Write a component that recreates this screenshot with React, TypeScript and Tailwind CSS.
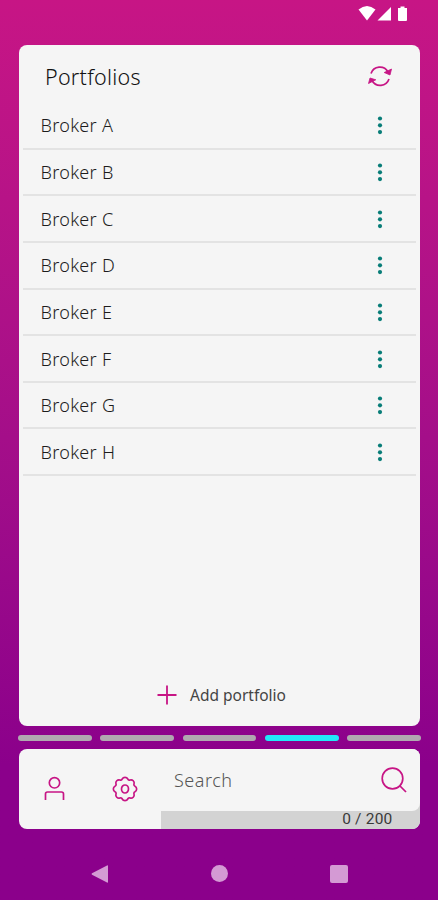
const brokers = ["A", "B", "C", "D", "E", "F", "G", "H"];
const pages = [0, 1, 2, 3, 4];
const activePage = 3;

const StatusBar = () => {
  return (
    <div className="flex h-[45px] justify-end pt-[5px] pr-[28px]">
      <svg width="52" height="18" viewBox="0 0 52 18" fill="white">
        <path d="M.5 4.5Q9-2.500 17.500 4.500L9 15.500Z" />
        <path d="M33 2V15.500H19.500Z" />
        <path d="M42.500 1.500h4V3h2.500v12q0 1-1 1h-7q-1 0-1-1V3h2.500Z" />
      </svg>
    </div>
  );
};

const RefreshIcon = () => {
  return (
    <svg
      width="26"
      height="24"
      viewBox="0 0 26 24"
      fill="none"
      stroke="#c71585"
      strokeWidth="1.7"
    >
      <path d="M4 8.500A9.300 9.300 0 0 1 21 7" />
      <path d="M22 14A9.300 9.300 0 0 1 5 15.500" />
      <path d="M17.200 7.500L24.500 4L23 10Z" fill="#c71585" strokeWidth=".8" />
      <path d="M8.800 14.800L3 13L1.500 18.500Z" fill="#c71585" strokeWidth=".8" />
    </svg>
  );
};

const BrokerRow = ({ name }: { name: string }) => {
  return (
    <li className="flex h-[46.650px] items-center justify-between border-b-2 border-[#e3e3e3] pr-[33px] pl-[18px]">
      <span className="pt-px text-[18px] font-light tracking-[0.3px] text-[#1c1c1c]">
        Broker {name}
      </span>
      <svg width="6" height="20" viewBox="0 0 6 20" fill="#087d78">
        <circle cx="3" cy="3.500" r="2.100" />
        <circle cx="3" cy="10.300" r="2.100" />
        <circle cx="3" cy="17.100" r="2.100" />
      </svg>
    </li>
  );
};

const PortfolioCard = () => {
  return (
    <section className="mr-[18px] ml-[18.500px] flex h-[681px] flex-col rounded-lg bg-[#f5f5f5] px-1">
      <header className="flex h-[58px] items-center justify-between pt-[6px] pr-[23px] pl-[22.500px]">
        <h1 className="text-[21.500px] font-[350] tracking-[0.25px] text-[#111]">Portfolios</h1>
        <RefreshIcon />
      </header>
      <ul>
        {brokers.map((name) => (
          <BrokerRow key={name} name={name} />
        ))}
      </ul>
      <button className="mt-auto mb-[19px] flex items-center gap-[13.500px] pl-[134px]">
        <svg width="20" height="20" viewBox="0 0 20 20" stroke="#c71585" strokeWidth="1.8">
          <path d="M10 .5V19.500M.5 10H19.500" />
        </svg>
        <span className="text-[15.500px] text-[#444]">Add portfolio</span>
      </button>
    </section>
  );
};

const BottomBar = () => {
  return (
    <section className="mt-2 mr-[18px] ml-[18.500px] flex h-[80.500px] overflow-hidden rounded-lg bg-[#f5f5f5]">
      <div className="flex w-[142.500px] items-center justify-between pr-[23px] pl-[25px]">
        <svg
          width="21"
          height="25"
          viewBox="0 0 21 25"
          fill="none"
          stroke="#c71585"
          strokeWidth="1.700"
        >
          <circle cx="10.500" cy="6.800" r="5.200" />
          <path d="M1.500 24V18Q1.500 16 3.500 16H17.500Q19.500 16 19.500 18V24" />
        </svg>
        <svg
          width="26"
          height="26"
          viewBox="-13 -13 26 26"
          fill="none"
          stroke="#c71585"
          strokeWidth="1.700"
          strokeLinejoin="round"
        >
          <path d="M-2.800-10A3.200 3.200 0 0 1 2.800-10A1.700 1.700 0 0 0 5.090-9.050A3.200 3.200 0 0 1 9.050-5.090A1.700 1.700 0 0 0 10-2.800A3.200 3.200 0 0 1 10 2.800A1.700 1.700 0 0 0 9.050 5.090A3.200 3.200 0 0 1 5.090 9.050A1.700 1.700 0 0 0 2.800 10A3.200 3.200 0 0 1-2.800 10A1.700 1.700 0 0 0-5.090 9.050A3.200 3.200 0 0 1-9.050 5.090A1.700 1.700 0 0 0-10 2.800A3.200 3.200 0 0 1-10-2.800A1.700 1.700 0 0 0-9.050-5.090A3.200 3.200 0 0 1-5.090-9.050A1.700 1.700 0 0 0-2.800-10Z" />
          <ellipse cx="0" cy="0" rx="3.500" ry="4" />
        </svg>
      </div>
      <div className="flex flex-1 flex-col bg-[#d3d3d3]">
        <div className="flex h-[62px] items-center justify-between rounded-br-lg bg-[#f5f5f5] pr-[13px] pl-[13px]">
          <span className="pt-0.5 text-[18px] font-light tracking-[0.500px] text-[#555]">
            Search
          </span>
          <svg
            width="26"
            height="26"
            viewBox="0 0 26 26"
            fill="none"
            stroke="#c71585"
            strokeWidth="1.700"
          >
            <circle cx="11.500" cy="11.500" r="10.300" />
            <path d="M18.500 18.500L25 25" />
          </svg>
        </div>
        <div className="pr-[27.500px] text-right font-[Roboto,'Noto_Sans',sans-serif] text-[15.500px] leading-[17px] tracking-[0.2px] text-[#3a3a3a]">
          0 / 200
        </div>
      </div>
    </section>
  );
};

export default function App() {
  return (
    <main className="flex h-[900px] w-[438px] flex-col bg-linear-to-b from-[#c71585] to-[#8b008b] to-85% font-['Noto_Sans','Open_Sans',sans-serif]">
      <StatusBar />
      <PortfolioCard />
      <div className="mt-[9px] mr-[17px] ml-[18px] flex h-[5.500px] gap-[8.500px]">
        {pages.map((page) => (
          <span
            key={page}
            className={`flex-1 rounded-full ${page === activePage ? "bg-[#22e8f8]" : "bg-[#b0a8b0]"}`}
          />
        ))}
      </div>
      <BottomBar />
      <nav className="mt-[36px] flex justify-between pr-[90.500px] pl-[90.500px]">
        <svg width="18" height="18" viewBox="0 0 18 18" fill="#d49ad4">
          <path d="M16 .5Q17 0 17 1V17Q17 18 16 17.500L1 9.800Q0 9 1 8.200Z" />
        </svg>
        <span className="size-[17px] rounded-full bg-[#d49ad4]" />
        <span className="size-[18px] rounded-[2px] bg-[#d49ad4]" />
      </nav>
    </main>
  );
}
